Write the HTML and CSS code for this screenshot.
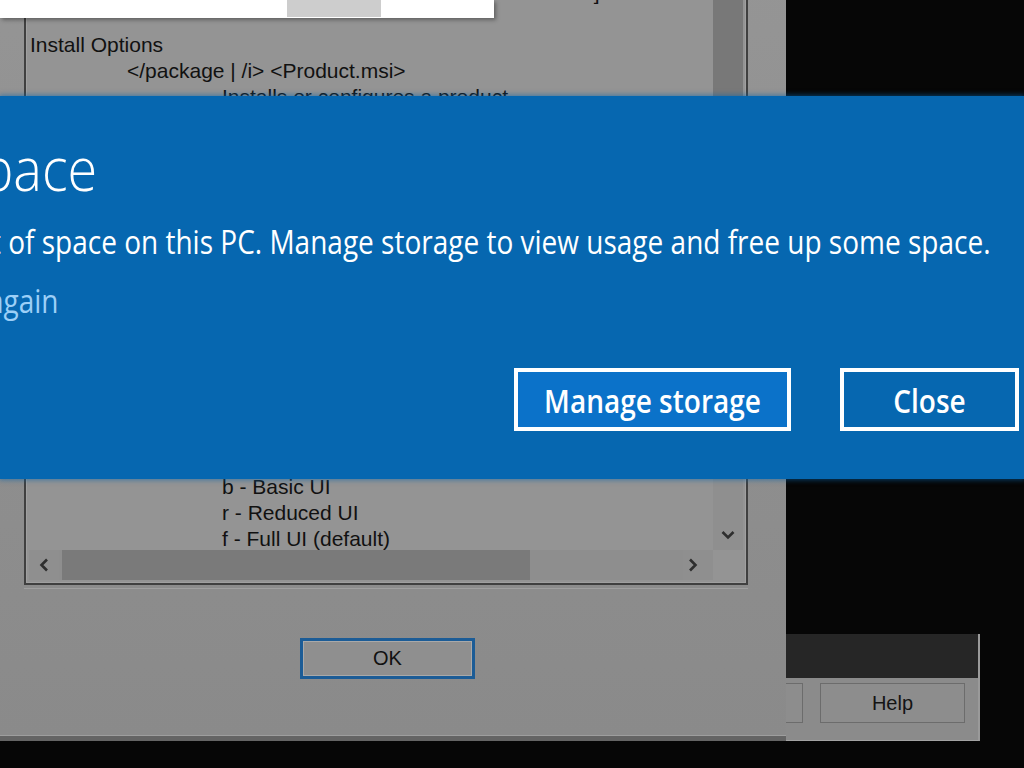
FILE: index.html
```html
<!DOCTYPE html>
<html lang="en">
<head>
<meta charset="utf-8">
<title>Low on space</title>
<link rel="stylesheet" href="styles.css">
</head>
<body>
<div class="screen">
  <div class="bg-window">
    <div class="bg-titlebar"></div>
    <div class="bg-body">
      <div class="bg-btn"></div>
      <div class="bg-btn">Help</div>
    </div>
  </div>

  <div class="dialog">
    <div class="listbox">
      <div class="list-main">
        <div class="list-text">
          <div class="ln">msiexec /Option &lt;Required Parameter&gt; [Optional Parameter]</div>
          <div class="ln">&nbsp;</div>
          <div class="ln">Install Options</div>
          <div class="ln i1">&lt;/package | /i&gt; &lt;Product.msi&gt;</div>
          <div class="ln i2">Installs or configures a product</div>
          <div class="ln i1">/a &lt;Product.msi&gt;</div>
          <div class="ln i2">Administrative install - Installs a product on the network</div>
          <div class="ln i1">/j&lt;u|m&gt; &lt;Product.msi&gt; [/t &lt;Transform List&gt;] [/g &lt;Language ID&gt;]</div>
          <div class="ln i2">Advertises a product - m to all users, u to current user</div>
          <div class="ln i1">&lt;/uninstall | /x&gt; &lt;Product.msi | ProductCode&gt;</div>
          <div class="ln i2">Uninstalls the product</div>
          <div class="ln">Display Options</div>
          <div class="ln i1">/quiet</div>
          <div class="ln i2">Quiet mode, no user interaction</div>
          <div class="ln i1">/passive</div>
          <div class="ln i2">Unattended mode - progress bar only</div>
          <div class="ln i1">/q[n|b|r|f]</div>
          <div class="ln i2">Sets user UI level</div>
          <div class="ln i2">n - No UI</div>
          <div class="ln i2">b - Basic UI</div>
          <div class="ln i2">r - Reduced UI</div>
          <div class="ln i2">f - Full UI (default)</div>
          <div class="ln i1">/help</div>
          <div class="ln i2">Help information</div>
        </div>
        <div class="vscroll">
          <div class="vthumb"></div>
          <div class="vtrack"></div>
          <div class="sb-arrow">
            <svg width="14" height="10" viewBox="0 0 14 10"><path d="M1.5 2 L7 7.5 L12.5 2" fill="none" stroke="#2e2e2e" stroke-width="2.6"/></svg>
          </div>
        </div>
      </div>
      <div class="hscroll">
        <div class="sb-arrow">
          <svg width="10" height="14" viewBox="0 0 10 14"><path d="M8 1.5 L2.5 7 L8 12.5" fill="none" stroke="#2e2e2e" stroke-width="2.6"/></svg>
        </div>
        <div class="hthumb"></div>
        <div class="htrack"></div>
        <div class="sb-arrow sb-arrow-right">
          <svg width="10" height="14" viewBox="0 0 10 14"><path d="M2 1.5 L7.5 7 L2 12.5" fill="none" stroke="#2e2e2e" stroke-width="2.6"/></svg>
        </div>
        <div class="corner"></div>
      </div>
    </div>
    <div class="separator"></div>
    <div class="dialog-actions">
      <div class="ok-btn">OK</div>
    </div>
  </div>

  <div class="popup"><div class="popup-block"></div></div>

  <div class="banner">
    <div class="banner-text">
      <div class="banner-title">Low on space</div>
      <div class="banner-message">You're running out of space on this PC. Manage storage to view usage and free up some space.</div>
      <div class="banner-link">Don't show this again</div>
    </div>
    <div class="banner-actions">
      <div class="banner-btn btn-primary"><span>Manage storage</span></div>
      <div class="banner-btn btn-secondary"><span>Close</span></div>
    </div>
  </div>
</div>
</body>
</html>
```

FILE: styles.css
```css
* {
  box-sizing: border-box;
  margin: 0;
  padding: 0;
}

html,
body {
  width: 1024px;
  height: 768px;
  overflow: hidden;
  background: #060606;
}

body {
  font-family: "Liberation Sans", Arial, sans-serif;
}

.screen {
  position: relative;
  width: 1024px;
  height: 768px;
  overflow: hidden;
  background: #060606;
}

/* window behind the dialog */
.bg-window {
  position: absolute;
  left: 560px;
  top: 634px;
  width: 420px;
  height: 107px;
  display: flex;
  flex-direction: column;
  background: #8b8b8b;
  border-right: 2px solid #9a9a9a;
  border-bottom: 1px solid #a3a3a3;
}

.bg-titlebar {
  height: 44px;
  background: #262626;
}

.bg-body {
  flex: 1;
  display: flex;
  justify-content: flex-end;
  align-items: flex-start;
  gap: 17px;
  padding: 5px 13px 0 0;
}

.bg-btn {
  width: 145px;
  height: 40px;
  border: 1px solid #6c6c6c;
  background: #8d8d8d;
  display: flex;
  align-items: center;
  justify-content: center;
  font-size: 20px;
  color: #141414;
}

/* msiexec dialog */
.dialog {
  position: absolute;
  left: -20px;
  top: -40px;
  width: 806px;
  height: 781px;
  padding: 15px 38px 0 44px;
  display: flex;
  flex-direction: column;
  background: linear-gradient(#959595, #8a8a8a);
  border-bottom: 5px solid #646464;
  box-shadow: inset 0 -1px 0 #9e9e9e;
}

.listbox {
  height: 610px;
  border: 2px solid #404040;
  padding: 3px;
  background: #949494;
  box-shadow: inset 0 0 0 1px #a0a0a0;
  display: flex;
  flex-direction: column;
}

.list-main {
  flex: 1;
  min-height: 0;
  display: flex;
}

.list-text {
  flex: 1;
  overflow: hidden;
  padding-left: 1px;
  font-size: 21px;
  line-height: 26px;
  color: #111;
}

.ln {
  height: 26px;
  white-space: pre;
}

.ln.i1 {
  padding-left: 97px;
}

.ln.i2 {
  padding-left: 192px;
}

.vscroll {
  width: 30px;
  display: flex;
  flex-direction: column;
}

.vthumb {
  height: 330px;
  background: #787878;
}

.vtrack {
  flex: 1;
  background: #8f8f8f;
}

.sb-arrow {
  width: 30px;
  height: 30px;
  display: flex;
  align-items: center;
  justify-content: center;
  background: #8f8f8f;
}

.vscroll .sb-arrow {
  align-items: flex-start;
  padding-top: 10px;
}

.hscroll {
  height: 30px;
  display: flex;
  background: #8e8e8e;
}

.hthumb {
  margin-left: 3px;
  width: 468px;
  background: #7a7a7a;
}

.htrack {
  flex: 1;
}

.sb-arrow-right {
  justify-content: flex-start;
  padding-left: 5px;
}

.corner {
  width: 30px;
  background: #949494;
}

.separator {
  margin-top: 3px;
  height: 1px;
  background: #a0a0a0;
}

.dialog-actions {
  margin-top: 49px;
  display: flex;
  justify-content: center;
  padding-left: 3px;
}

.ok-btn {
  width: 175px;
  height: 41px;
  border: 3px solid #1c5c96;
  box-shadow: inset 0 0 0 1px #a9a9a9;
  background: #8f8f8f;
  display: flex;
  align-items: center;
  justify-content: center;
  font-size: 20px;
  color: #111;
}

/* white popup strip at top */
.popup {
  position: absolute;
  left: 0;
  top: 0;
  width: 494px;
  height: 18px;
  background: #fff;
  box-shadow: 2px 2px 4px rgba(0, 0, 0, 0.35);
  display: flex;
  padding-left: 287px;
}

.popup-block {
  width: 94px;
  height: 17px;
  background: #cdcdcd;
}

/* blue storage banner */
.banner {
  position: absolute;
  left: 0;
  right: 0;
  top: 96px;
  height: 383px;
  padding-top: 39px;
  display: flex;
  flex-direction: column;
  background: #0667b0;
  box-shadow: 0 0 5px 1px rgba(8, 100, 170, 0.6);
  font-family: "Open Sans", "Noto Sans", sans-serif;
  color: #fff;
  overflow: hidden;
}

.banner-text {
  margin-left: -243px;
  white-space: nowrap;
}

.banner-title {
  margin-left: 9px;
  height: 64px;
  font-size: 54px;
  font-weight: 300;
  line-height: 64px;
  transform: scaleY(1.12);
  transform-origin: left center;
}

.banner-message {
  margin-top: 22px;
  font-size: 28px;
  line-height: 40px;
  transform: scaleY(1.2);
  transform-origin: left center;
}

.banner-link {
  margin-top: 19px;
  margin-left: 22px;
  font-size: 28px;
  line-height: 40px;
  color: #9ccff7;
  transform: scaleY(1.2);
  transform-origin: left center;
}

.banner-actions {
  margin-top: 48px;
  display: flex;
  justify-content: flex-end;
  gap: 49px;
  padding-right: 5px;
}

.banner-btn {
  height: 63px;
  border: 4px solid #fff;
  display: flex;
  align-items: center;
  justify-content: center;
  font-size: 28px;
  font-weight: 600;
  color: #fff;
}

.banner-btn span {
  display: inline-block;
  transform: scaleY(1.15);
}

.btn-primary {
  width: 277px;
  background: #0b72c9;
}

.btn-secondary {
  width: 179px;
  background: #0667b0;
}
```
